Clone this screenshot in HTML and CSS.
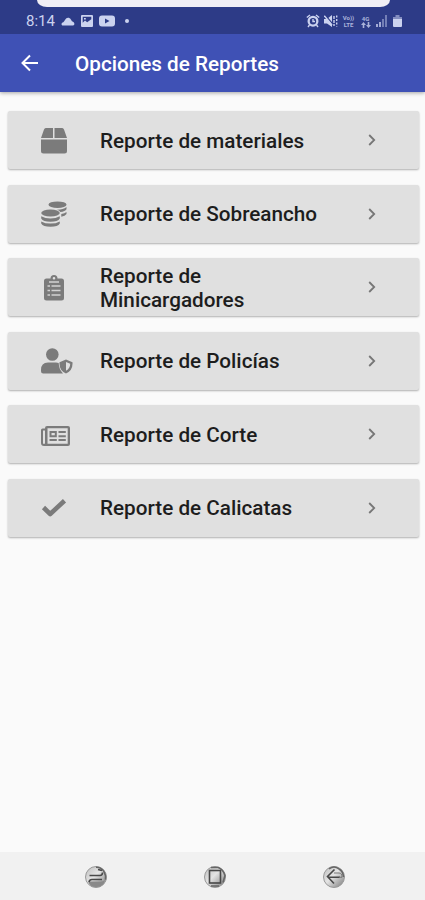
FILE: index.html
```html
<!DOCTYPE html>
<html lang="es">
<head>
    <meta charset="UTF-8">
    <meta name="viewport" content="width=device-width, initial-scale=1.0">
    <title>Opciones de Reportes</title>
    <link rel="stylesheet" href="styles.css">
</head>
<body>
    <header>
        <div class="status-bar">
            <div class="notch"></div>
            <span class="clock">8:14</span>
            <svg class="cloud" width="14" height="9" viewBox="0 0 14 9"><path d="M2 8.500C0 8.500 0 5.500 2.300 5.200 3.500 4.300 4.500.7 7 .7s3.300 2.600 4 3.600C14 5 14 8.500 12 8.500z"/></svg>
            <svg class="picture" width="12" height="12" viewBox="0 0 12 12"><path fill-rule="evenodd" d="M1 0h10q1 0 1 1v10q0 1-1 1H1q-1 0-1-1V1q0-1 1-1zm.7 1.700v6L4 5.500l2.200 1.800 4.100-3V1.700zM3 3h1.800v1.500H3z"/></svg>
            <svg class="video" width="16" height="12" viewBox="0 0 16 12"><path fill-rule="evenodd" d="M3 .5h10q3 0 3 3v5q0 3-3 3H3q-3 0-3-3v-5q0-3 3-3zM6 3.500v5L10.500 6z"/></svg>
            <span class="dot"></span>
            <div class="status-right">
                <svg width="14" height="14" viewBox="0 0 14 14"><path fill-rule="evenodd" d="M7 1.700a5.500 5.500 0 1 1 0 11A5.500 5.500 0 0 1 7 1.700zm0 2.300a3.200 3.200 0 1 0 0 6.400A3.200 3.200 0 0 0 7 4z"/><path class="line" d="M.8 3.500 4 1M13.200 3.500 10 1M3.500 11 2 13M10.500 11 12 13M7 5v2.500h2"/></svg>
                <svg width="14" height="14" viewBox="0 0 14 14"><path d="M0 5h3l5-4v12L3 9.500H0z"/><path class="cut" d="M1 1 9 10.500"/><path class="line" d="M.3 1.800 8 11"/><path class="line" stroke-dasharray="3 1" d="M10 2v10"/><path class="line" stroke-dasharray="2 1.500" d="M12.700 1.500v11"/></svg>
                <span class="network"><span>Vo))</span><span>LTE</span></span>
                <span class="network"><span>4G</span><svg width="10" height="6" viewBox="0 0 10 6"><path d="M0 3 2.500 0 5 3H3.300v3H1.700V3zM5 3h1.700V0h1.600v3H10L7.500 6z"/></svg></span>
                <svg class="signal" width="12" height="12" viewBox="0 0 12 12"><path opacity=".75" d="M0 9h2v3H0zM3 7h2v5H3z"/><path opacity=".45" d="M6 4h2v8H6zM9 0h2v12H9z"/></svg>
                <svg class="battery" width="9" height="12" viewBox="0 0 9 12"><path opacity=".55" d="M2.500 0h4v2H9v3H0V2h2.500z"/><path d="M0 4h9v7q0 1-1 1H1q-1 0-1-1z"/></svg>
            </div>
        </div>
        <div class="app-bar">
            <svg class="back" width="18" height="18" viewBox="0 0 18 18"><path d="M17 9H2M9 1.500 1.500 9 9 16.500"/></svg>
            <h1>Opciones de Reportes</h1>
        </div>
    </header>

    <main>
        <a class="card">
            <span class="icon"><svg width="26" height="26" viewBox="0 0 26 26"><path d="M4.800 0H12v10H0L3 1.500Q3.500 0 4.800 0zM13.500 0h7.700q1.300 0 1.800 1.500L26 10H13.500zM0 11.500h26V23q0 2.500-2.500 2.500h-21Q0 25.500 0 23z"/></svg></span>
            <span class="label">Reporte de materiales</span>
            <svg class="chevron" width="8" height="12" viewBox="0 0 8 12"><path d="M1.200 1 6.200 6l-5 5"/></svg>
        </a>
        <a class="card">
            <span class="icon"><svg width="26" height="26" viewBox="0 0 26 26"><ellipse cx="16.500" cy="3.700" rx="9" ry="3.300"/><path d="M25.500 6v2.200q-1.300 2.300-6.200 2.800-.5-1.300-3.300-2.300Q22 8.800 25.500 6zM25.500 11v2q-1.300 2-5.200 2.700v-2.700q3.500-.5 5.200-2z"/><ellipse cx="9.500" cy="12" rx="9.300" ry="3.500"/><path d="M.2 15.200q4 2.200 9.300 2.200t9.300-2.200v2.300Q17 20.700 9.500 20.700T.2 17.500zM.2 20.400q4 2.200 9.300 2.200t9.300-2.200v2.100Q17 25.700 9.500 25.700T.2 22.500z"/></svg></span>
            <span class="label">Reporte de Sobreancho</span>
            <svg class="chevron" width="8" height="12" viewBox="0 0 8 12"><path d="M1.200 1 6.200 6l-5 5"/></svg>
        </a>
        <a class="card">
            <span class="icon clipboard"><svg width="20" height="26" viewBox="0 0 20 26"><path fill-rule="evenodd" d="M2.500 3.500H6.500a3.500 3.500 0 0 1 7 0h4q2.500 0 2.500 2.500v17q0 2.500-2.500 2.500h-15Q0 25.500 0 23V6q0-2.500 2.500-2.500zM10 2a1.300 1.300 0 1 0 0 2.600A1.300 1.300 0 0 0 10 2z"/><path class="paper" d="M5 7h10M3.500 11H6M7.500 11h9M3.500 15.500H6M7.500 15.500h9M3.500 20H6M7.500 20h9"/></svg></span>
            <span class="label">Reporte de Minicargadores</span>
            <svg class="chevron" width="8" height="12" viewBox="0 0 8 12"><path d="M1.200 1 6.200 6l-5 5"/></svg>
        </a>
        <a class="card">
            <span class="icon"><svg width="32" height="26" viewBox="0 0 32 26"><circle cx="11.300" cy="6.500" r="6.300"/><path d="M7 14.500h8q1.500 0 2.700.6.200 6.500 4.300 10.400H2.200Q0 25.500 0 23.300V22q0-7.500 7-7.500z"/><path fill-rule="evenodd" d="M25 11.500l6.500 2.700q.6 8-6.500 11.300-7.100-3.300-6.500-11.300zm0 2.500v8.700q4.200-2.300 4.200-7z"/></svg></span>
            <span class="label">Reporte de Policías</span>
            <svg class="chevron" width="8" height="12" viewBox="0 0 8 12"><path d="M1.200 1 6.200 6l-5 5"/></svg>
        </a>
        <a class="card">
            <span class="icon newspaper"><svg width="29" height="20" viewBox="0 0 29 20"><path fill-rule="evenodd" d="M6 0h21q2 0 2 2v16q0 2-2 2H3q-3 0-3-3V4q0-1.500 1.500-1.500H4V2q0-2 2-2zm.5 2.300v15.400h20.200V2.300zM2 4.500V17q0 1 1 1t1-1V4.500z"/><path fill-rule="evenodd" d="M8.500 5h7.300v6.200H8.500zm2 2v2.200h3.300V7zM17.500 5h7.300v2h-7.300zM17.500 9.200h7.300v2h-7.300zM8.500 13h7.300v2H8.500zM17.500 13h7.300v2h-7.300z"/></svg></span>
            <span class="label">Reporte de Corte</span>
            <svg class="chevron" width="8" height="12" viewBox="0 0 8 12"><path d="M1.200 1 6.200 6l-5 5"/></svg>
        </a>
        <a class="card">
            <span class="icon"><svg width="26" height="20" viewBox="0 0 26 20"><path class="check" d="M2.500 9.500 9.200 16 23.500 2.700"/></svg></span>
            <span class="label">Reporte de Calicatas</span>
            <svg class="chevron" width="8" height="12" viewBox="0 0 8 12"><path d="M1.200 1 6.200 6l-5 5"/></svg>
        </a>
    </main>

    <nav>
        <svg width="24" height="24" viewBox="0 0 24 24">
            <defs>
                <linearGradient id="metal" x1="0" y1="0" x2="1" y2="1">
                    <stop offset="0" stop-color="#bcbcbc"/>
                    <stop offset=".45" stop-color="#e4e4e4"/>
                    <stop offset="1" stop-color="#777"/>
                </linearGradient>
            </defs>
            <circle class="ring" cx="12" cy="12" r="10.500"/>
            <path class="shade" d="M12 2.200q5.500 0 8 4.500 2 3 1.500 8"/>
            <path fill="#8a8a8a" d="M4 16.500h13q3 0 4-2.500-1 8-9 8-6 0-8-5.500z"/>
            <path class="mark" d="M5.500 10.500H16q2.500 0 2.500-3M14 4.500l4 1M18 14.500H8q-2.500 0-3 2.500"/>
        </svg>
        <svg width="24" height="24" viewBox="0 0 24 24">
            <circle class="ring" cx="12" cy="12" r="10.500"/>
            <path class="shade" d="M8 2.500h7q5 1.500 7 8l-2 7M8 21h8"/>
            <rect class="mark" x="6.500" y="5.500" width="11" height="12.500"/>
        </svg>
        <svg width="24" height="24" viewBox="0 0 24 24">
            <circle class="ring" cx="12" cy="12" r="10.500"/>
            <path class="shade" d="M7 4q5-4 10 0 4 2 4.500 8"/>
            <path class="mark" d="M12.500 4.500 5.500 11.500 12 18.500M6.500 12.300H18"/>
            <path class="thin" d="M12 8h5q3 0 3 4.300h-3"/>
        </svg>
    </nav>
</body>
</html>
```
FILE: styles.css
```css
* {
    box-sizing: border-box;
}
body {
    margin: 0;
    height: 900px;
    display: flex;
    flex-direction: column;
    background: #fafafa;
    color: #1d1d1d;
    font-family: Roboto, sans-serif;
    overflow: hidden;
}
svg {
    display: block;
    flex-shrink: 0;
}
header {
    box-shadow: 0 1px 4px rgba(0, 0, 0, 0.35);
}
.status-bar {
    position: relative;
    display: flex;
    align-items: center;
    height: 34px;
    padding: 8px 23px 0 26px;
    background: #2d3b87;
    color: #cbd2ef;
    fill: #cbd2ef;
}
.notch {
    position: absolute;
    top: 0;
    left: 37px;
    width: 353px;
    height: 7px;
    background: #f0eef5;
    border-radius: 0 0 10px 10px / 0 0 7px 7px;
}
.clock {
    width: 35px;
    font-size: 15px;
    line-height: 20px;
}
.picture {
    margin-left: 6px;
}
.video {
    margin-left: 6px;
}
.dot {
    width: 4px;
    height: 4px;
    margin-left: 10px;
    border-radius: 50%;
    background: #cbd2ef;
}
.status-right {
    display: flex;
    align-items: center;
    margin-left: auto;
    gap: 4px;
}
.line {
    fill: none;
    stroke: #cbd2ef;
    stroke-width: 1.4;
}
.cut {
    stroke: #2d3b87;
    stroke-width: 1.5;
}
.network {
    display: flex;
    flex-direction: column;
    align-items: center;
    width: 13px;
    font-size: 6px;
    line-height: 7px;
    font-weight: 700;
    opacity: 0.8;
}
.battery {
    margin-left: 1px;
}
.app-bar {
    display: flex;
    align-items: center;
    height: 58px;
    padding: 0 21px;
    background: #3f51b5;
    color: #fff;
}
.back {
    fill: none;
    stroke: #fff;
    stroke-width: 2;
}
h1 {
    margin: 0 0 0 36px;
    padding-top: 2px;
    font-size: 20.7px;
    font-weight: 500;
}
main {
    flex: 1;
    display: flex;
    flex-direction: column;
    gap: 15.600px;
    padding: 19px 6px 0 8px;
}
.card {
    display: flex;
    align-items: center;
    height: 58px;
    padding: 0 43px 0 33px;
    background: #e0e0e0;
    border-radius: 2px;
    box-shadow: 0 1px 2px rgba(0, 0, 0, 0.3);
}
.icon {
    width: 59px;
    padding-top: 1px;
    fill: #7b7b7b;
}
.clipboard {
    padding: 2px 0 0 3px;
}
.newspaper {
    padding-top: 3px;
}
.paper {
    stroke: #d2d2d2;
    stroke-width: 1.7;
}
.check {
    fill: none;
    stroke: #7b7b7b;
    stroke-width: 4.6;
    stroke-linejoin: round;
}
.label {
    width: 230px;
    padding-top: 1px;
    font-size: 20.7px;
    line-height: 24px;
    font-weight: 500;
}
.chevron {
    margin-left: auto;
    fill: none;
    stroke: #777;
    stroke-width: 1.8;
}
nav {
    display: flex;
    align-items: center;
    justify-content: space-between;
    height: 48px;
    padding: 1px 79px 0 84px;
    background: #f1f1f1;
}
.ring {
    fill: url(#metal);
    stroke: #999;
    stroke-width: 1;
}
.shade {
    fill: none;
    stroke: #666;
    stroke-width: 1.6;
}
.mark {
    fill: none;
    stroke: #484848;
    stroke-width: 1.6;
}
.thin {
    fill: none;
    stroke: #777;
    stroke-width: 1;
}
```
